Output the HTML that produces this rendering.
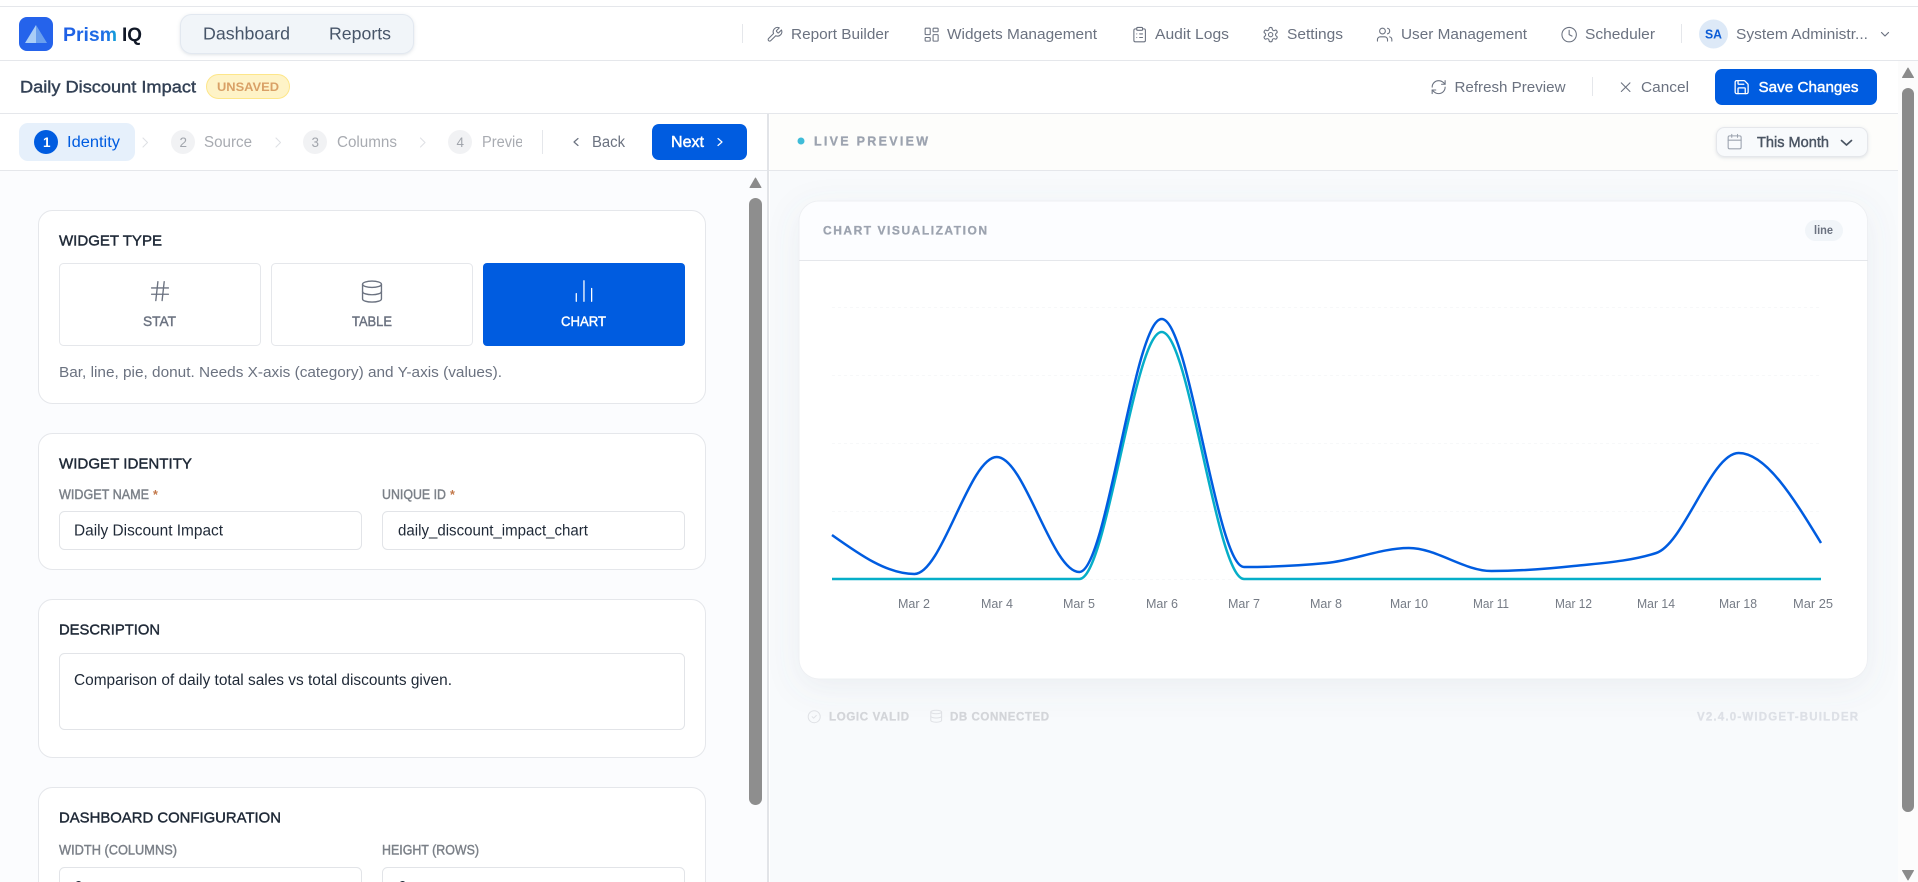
<!DOCTYPE html>
<html lang="en">
<head>
<meta charset="utf-8">
<title>Daily Discount Impact - Prism IQ</title>
<style>
html,body{margin:0;padding:0;background:#fff;width:1918px;height:882px;overflow:hidden}
svg{display:block}
text{font-family:"Liberation Sans",Arial,sans-serif;white-space:pre}
.b{font-weight:700}
.s{fill:currentColor;stroke:currentColor;stroke-width:.42px}
.x{font-weight:700;fill:currentColor;stroke:currentColor;stroke-width:.3px}
.ic{fill:none;stroke-linecap:round;stroke-linejoin:round}
</style>
</head>
<body>
<svg xmlns="http://www.w3.org/2000/svg" width="1918" height="882" viewBox="0 0 1918 882">
<defs>
<linearGradient id="pg" x1="0" x2="1" y1="0" y2="0"><stop offset="0" stop-color="#1f5fe6"/><stop offset=".8" stop-color="#1f6fe6"/><stop offset="1" stop-color="#12a5d8"/></linearGradient>
<filter id="cs" x="-10%" y="-15%" width="120%" height="130%"><feDropShadow dx="0" dy="8" stdDeviation="16" flood-color="#64748b" flood-opacity=".09"/></filter>
<filter id="ss" x="-10%" y="-20%" width="120%" height="150%"><feDropShadow dx="0" dy="1" stdDeviation="1.5" flood-color="#64748b" flood-opacity=".2"/></filter>
<clipPath id="pv"><rect x="480" y="125" width="42" height="34"/></clipPath>
<clipPath id="chead"><rect x="799" y="201" width="1069" height="59"/></clipPath>
</defs>

<!-- page backgrounds -->
<rect width="1918" height="882" fill="#fff"/>
<rect x="0" y="171" width="768" height="711" fill="#fbfcfe"/>
<rect x="770" y="114" width="1128" height="56" fill="#fdfdfb"/>
<rect x="770" y="171" width="1128" height="711" fill="#f8fafc"/>
<rect x="1898" y="61" width="20" height="821" fill="#fcfcfc"/>
<rect x="0" y="6" width="1918" height="1" fill="#e5e7eb"/>
<rect x="0" y="60" width="1918" height="1" fill="#e5e7eb"/>
<rect x="0" y="113" width="1898" height="1" fill="#e5e7eb"/>
<rect x="0" y="170" width="1898" height="1" fill="#e5e7eb"/>
<rect x="767" y="114" width="2" height="768" fill="#e2e4e8"/>

<!-- top nav: logo -->
<rect x="19" y="17" width="34" height="34" rx="8" fill="#2563eb"/>
<path d="M36 25L25 43H36Z" fill="#a9cdf6"/>
<path d="M36 25L47 43H36Z" fill="#6a9fee"/>
<text x="63" y="41" font-size="19.500" class="b" fill="url(#pg)" textLength="54" lengthAdjust="spacingAndGlyphs">Prism</text>
<text x="122" y="41" font-size="19.500" class="b" fill="#111827" textLength="20" lengthAdjust="spacingAndGlyphs">IQ</text>

<rect x="180.500" y="14.500" width="233" height="39" rx="11" fill="#f1f5f9" stroke="#e2e8f0" filter="url(#ss)"/>
<text x="203" y="39.500" font-size="17.500" fill="#475569" textLength="87" lengthAdjust="spacingAndGlyphs">Dashboard</text>
<text x="329" y="39.500" font-size="17.500" fill="#475569" textLength="62" lengthAdjust="spacingAndGlyphs">Reports</text>

<rect x="742" y="24" width="1" height="19" fill="#e5e7eb"/>

<!-- top nav: links -->
<g class="ic" stroke="#6b7280" stroke-width="1.500">
<g transform="translate(766,26) scale(.72)"><path d="M14.7 6.3a1 1 0 0 0 0 1.4l1.6 1.6a1 1 0 0 0 1.4 0l3.77-3.77a6 6 0 0 1-7.94 7.94l-6.91 6.91a2.12 2.12 0 0 1-3-3l6.91-6.91a6 6 0 0 1 7.94-7.94l-3.76 3.76z"/></g>
<g transform="translate(923,26) scale(.72)"><rect x="3" y="3" width="7" height="9" rx="1"/><rect x="14" y="3" width="7" height="5" rx="1"/><rect x="14" y="12" width="7" height="9" rx="1"/><rect x="3" y="16" width="7" height="5" rx="1"/></g>
<g transform="translate(1131,26) scale(.72)"><rect x="8" y="2" width="8" height="4" rx="1"/><path d="M16 4h2a2 2 0 0 1 2 2v14a2 2 0 0 1-2 2H6a2 2 0 0 1-2-2V6a2 2 0 0 1 2-2h2"/><path d="M12 11h4M12 16h4M8 11h.01M8 16h.01"/></g>
<g transform="translate(1262,26) scale(.72)"><path d="M12.22 2h-.44a2 2 0 0 0-2 2v.18a2 2 0 0 1-1 1.730l-.43.25a2 2 0 0 1-2 0l-.15-.08a2 2 0 0 0-2.730.73l-.22.38a2 2 0 0 0 .73 2.730l.15.1a2 2 0 0 1 1 1.720v.51a2 2 0 0 1-1 1.740l-.15.09a2 2 0 0 0-.73 2.730l.22.38a2 2 0 0 0 2.730.73l.15-.08a2 2 0 0 1 2 0l.43.25a2 2 0 0 1 1 1.730V20a2 2 0 0 0 2 2h.44a2 2 0 0 0 2-2v-.18a2 2 0 0 1 1-1.730l.43-.25a2 2 0 0 1 2 0l.15.08a2 2 0 0 0 2.730-.73l.22-.39a2 2 0 0 0-.73-2.730l-.15-.08a2 2 0 0 1-1-1.740v-.5a2 2 0 0 1 1-1.740l.15-.09a2 2 0 0 0 .73-2.730l-.22-.38a2 2 0 0 0-2.730-.73l-.15.08a2 2 0 0 1-2 0l-.43-.25a2 2 0 0 1-1-1.730V4a2 2 0 0 0-2-2z"/><circle cx="12" cy="12" r="3"/></g>
<g transform="translate(1376,26) scale(.72)"><path d="M16 21v-2a4 4 0 0 0-4-4H6a4 4 0 0 0-4 4v2"/><circle cx="9" cy="7" r="4"/><path d="M22 21v-2a4 4 0 0 0-3-3.870"/><path d="M16 3.130a4 4 0 0 1 0 7.750"/></g>
<g transform="translate(1560.500,26) scale(.72)"><circle cx="12" cy="12" r="10"/><path d="M12 6v6l4 2"/></g>
</g>
<g font-size="15" fill="#6b7280">
<text x="791" y="39" textLength="98" lengthAdjust="spacingAndGlyphs">Report Builder</text>
<text x="947" y="39" textLength="150" lengthAdjust="spacingAndGlyphs">Widgets Management</text>
<text x="1155" y="39" textLength="74" lengthAdjust="spacingAndGlyphs">Audit Logs</text>
<text x="1287" y="39" textLength="56" lengthAdjust="spacingAndGlyphs">Settings</text>
<text x="1401" y="39" textLength="126" lengthAdjust="spacingAndGlyphs">User Management</text>
<text x="1585" y="39" textLength="70" lengthAdjust="spacingAndGlyphs">Scheduler</text>
<text x="1736" y="39" textLength="132" lengthAdjust="spacingAndGlyphs">System Administr...</text>
</g>
<rect x="1681" y="24" width="1" height="19" fill="#e5e7eb"/>
<circle cx="1713.500" cy="34" r="14.500" fill="#dde9f7"/>
<text x="1705" y="38.500" font-size="12.500" class="b" fill="#0b5cd6" textLength="17" lengthAdjust="spacingAndGlyphs">SA</text>
<path class="ic" d="M1881.500 32.500l3.500 3.500 3.500-3.500" stroke="#6b7280" stroke-width="1.200"/>

<!-- sub header -->
<text x="20" y="92.500" font-size="17" class="s" color="#334155" textLength="176" lengthAdjust="spacingAndGlyphs">Daily Discount Impact</text>
<rect x="206.500" y="74.500" width="83" height="24" rx="12" fill="#fef3c7" stroke="#fde68a"/>
<text x="217" y="91" font-size="12" class="b" fill="#d9a066" textLength="62" lengthAdjust="spacingAndGlyphs">UNSAVED</text>
<g class="ic" stroke="#6b7280" stroke-width="1.500">
<g transform="translate(1430,78.500) scale(.72)"><path d="M3 12a9 9 0 0 1 9-9 9.750 9.750 0 0 1 6.740 2.740L21 8"/><path d="M21 3v5h-5"/><path d="M21 12a9 9 0 0 1-9 9 9.750 9.750 0 0 1-6.740-2.740L3 16"/><path d="M8 16H3v5"/></g>
<g transform="translate(1617,78.500) scale(.72)"><path d="M18 6 6 18M6 6l12 12"/></g>
</g>
<text x="1454.500" y="92" font-size="15" fill="#6b7280" textLength="111" lengthAdjust="spacingAndGlyphs">Refresh Preview</text>
<rect x="1592" y="77" width="1" height="19" fill="#e5e7eb"/>
<text x="1641" y="92" font-size="15" fill="#6b7280" textLength="48" lengthAdjust="spacingAndGlyphs">Cancel</text>
<rect x="1715" y="69" width="162" height="36" rx="7" fill="#005ce0"/>
<g class="ic" stroke="#fff" stroke-width="1.800" transform="translate(1733,78.500) scale(.72)"><path d="M15.200 3a2 2 0 0 1 1.400.6l3.800 3.800a2 2 0 0 1 .6 1.400V19a2 2 0 0 1-2 2H5a2 2 0 0 1-2-2V5a2 2 0 0 1 2-2z"/><path d="M17 21v-7a1 1 0 0 0-1-1H8a1 1 0 0 0-1 1v7"/><path d="M7 3v4a1 1 0 0 0 1 1h7"/></g>
<text x="1758.500" y="92" font-size="15" class="s" color="#fff" textLength="100" lengthAdjust="spacingAndGlyphs">Save Changes</text>

<!-- stepper -->
<rect x="19" y="123" width="116" height="38" rx="9" fill="#e6f0fb"/>
<circle cx="46" cy="142" r="12" fill="#005ce0"/>
<text x="43" y="147" font-size="13.500" class="b" fill="#fff">1</text>
<text x="67" y="147" font-size="15.500" fill="#005ce0" textLength="53" lengthAdjust="spacingAndGlyphs">Identity</text>
<g class="ic" stroke="#dfe1e5" stroke-width="1.100">
<path d="M143 138l4.500 4.500-4.500 4.500M276 138l4.500 4.500-4.500 4.500M420.500 138l4.500 4.500-4.500 4.500"/>
</g>
<g fill="#f1f2f4"><circle cx="183" cy="142" r="12"/><circle cx="315" cy="142" r="12"/><circle cx="460" cy="142" r="12"/></g>
<g font-size="13.500" fill="#a1a5ac"><text x="179.500" y="147">2</text><text x="311.500" y="147">3</text><text x="456.500" y="147">4</text></g>
<g font-size="15.500" fill="#a8abb1">
<text x="204" y="147" textLength="48" lengthAdjust="spacingAndGlyphs">Source</text>
<text x="337" y="147" textLength="60" lengthAdjust="spacingAndGlyphs">Columns</text>
<text x="482" y="147" textLength="52" lengthAdjust="spacingAndGlyphs" clip-path="url(#pv)">Preview</text>
</g>
<rect x="542" y="130" width="1" height="24" fill="#e5e7eb"/>
<path class="ic" d="M578 138.500l-4 3.500 4 3.500" stroke="#6b7280" stroke-width="1.200"/>
<text x="592" y="147" font-size="15.500" fill="#6b7280" textLength="33" lengthAdjust="spacingAndGlyphs">Back</text>
<rect x="652" y="124" width="95" height="36" rx="7" fill="#005ce0"/>
<text x="671" y="147" font-size="15.500" class="s" color="#fff" textLength="33" lengthAdjust="spacingAndGlyphs">Next</text>
<path class="ic" d="M718 138.500l4 3.500-4 3.500" stroke="#fff" stroke-width="1.200"/>

<!-- left: widget type card -->
<rect x="38.500" y="210.500" width="667" height="193" rx="14" fill="#fff" stroke="#e5e7eb"/>
<text x="59" y="245.500" font-size="15" class="s" color="#1f2937" textLength="103" lengthAdjust="spacingAndGlyphs">WIDGET TYPE</text>
<rect x="59.500" y="263.500" width="201" height="82" rx="4" fill="#fff" stroke="#e5e7eb"/>
<rect x="271.500" y="263.500" width="201" height="82" rx="4" fill="#fff" stroke="#e5e7eb"/>
<rect x="483" y="263" width="202" height="83" rx="4" fill="#005ce0"/>
<g class="ic" stroke="#6b7280" stroke-width="1.300">
<g transform="translate(147.400,278.500) scale(1.050)"><path d="M4 9h16M4 15h16M10 3 8 21M16 3l-2 18"/></g>
<g transform="translate(359.400,279) scale(1.050)"><ellipse cx="12" cy="5" rx="9" ry="3"/><path d="M3 5V19A9 3 0 0 0 21 19V5"/><path d="M3 12A9 3 0 0 0 21 12"/></g>
</g>
<g class="ic" stroke="#fff" stroke-width="1" transform="translate(568.600,275.700) scale(1.280)"><path d="M18 20V10M12 20V4M6 20v-6"/></g>
<text x="143" y="326" font-size="13.500" class="s" color="#6b7280" textLength="33" lengthAdjust="spacingAndGlyphs">STAT</text>
<text x="352" y="326" font-size="13.500" class="s" color="#6b7280" textLength="40" lengthAdjust="spacingAndGlyphs">TABLE</text>
<text x="561" y="326" font-size="13.500" class="s" color="#fff" textLength="45" lengthAdjust="spacingAndGlyphs">CHART</text>
<text x="59" y="377" font-size="15" fill="#6b7280" textLength="443" lengthAdjust="spacingAndGlyphs">Bar, line, pie, donut. Needs X-axis (category) and Y-axis (values).</text>

<!-- left: widget identity card -->
<rect x="38.500" y="433.500" width="667" height="136" rx="14" fill="#fff" stroke="#e5e7eb"/>
<text x="59" y="468.500" font-size="15" class="s" color="#1f2937" textLength="133" lengthAdjust="spacingAndGlyphs">WIDGET IDENTITY</text>
<text x="59" y="499" font-size="13.500" class="s" color="#7b8088" textLength="90" lengthAdjust="spacingAndGlyphs">WIDGET NAME</text>
<text x="153" y="499" font-size="12.500" class="b" fill="#c2784a">*</text>
<text x="382" y="499" font-size="13.500" class="s" color="#7b8088" textLength="64" lengthAdjust="spacingAndGlyphs">UNIQUE ID</text>
<text x="450" y="499" font-size="12.500" class="b" fill="#c2784a">*</text>
<rect x="59.500" y="511.500" width="302" height="38" rx="5" fill="#fff" stroke="#e2e4e8"/>
<rect x="382.500" y="511.500" width="302" height="38" rx="5" fill="#fff" stroke="#e2e4e8"/>
<text x="74" y="535.500" font-size="15.500" fill="#1f2937" textLength="149" lengthAdjust="spacingAndGlyphs">Daily Discount Impact</text>
<text x="398" y="535.500" font-size="15.500" fill="#1f2937" textLength="190" lengthAdjust="spacingAndGlyphs">daily_discount_impact_chart</text>

<!-- left: description card -->
<rect x="38.500" y="599.500" width="667" height="158" rx="14" fill="#fff" stroke="#e5e7eb"/>
<text x="59" y="634.500" font-size="15" class="s" color="#1f2937" textLength="101" lengthAdjust="spacingAndGlyphs">DESCRIPTION</text>
<rect x="59.500" y="653.500" width="625" height="76" rx="5" fill="#fff" stroke="#e2e4e8"/>
<text x="74" y="685" font-size="15.500" fill="#1f2937" textLength="378" lengthAdjust="spacingAndGlyphs">Comparison of daily total sales vs total discounts given.</text>

<!-- left: dashboard configuration card -->
<rect x="38.500" y="787.500" width="667" height="120" rx="14" fill="#fff" stroke="#e5e7eb"/>
<text x="59" y="822.500" font-size="15" class="s" color="#1f2937" textLength="222" lengthAdjust="spacingAndGlyphs">DASHBOARD CONFIGURATION</text>
<text x="59" y="854.500" font-size="13.500" class="s" color="#7b8088" textLength="118" lengthAdjust="spacingAndGlyphs">WIDTH (COLUMNS)</text>
<text x="382" y="854.500" font-size="13.500" class="s" color="#7b8088" textLength="97" lengthAdjust="spacingAndGlyphs">HEIGHT (ROWS)</text>
<rect x="59.500" y="867.500" width="302" height="38" rx="5" fill="#fff" stroke="#e2e4e8"/>
<rect x="382.500" y="867.500" width="302" height="38" rx="5" fill="#fff" stroke="#e2e4e8"/>
<text x="74" y="891" font-size="15" fill="#1f2937">6</text>
<text x="398" y="891" font-size="15" fill="#1f2937">6</text>

<!-- left scrollbar -->
<path d="M755.500 178l5.500 9.500h-11z" fill="#8b8b8b" stroke="#8b8b8b" stroke-linejoin="round"/>
<rect x="749" y="198" width="13" height="607" rx="6.500" fill="#8e8e8e"/>

<!-- preview header -->
<circle cx="801" cy="141" r="3.500" fill="#3fbcd8"/>
<text x="814" y="145.500" font-size="12.500" class="x" color="#9ca3af" textLength="114" lengthAdjust="spacing">LIVE PREVIEW</text>
<rect x="1716.500" y="127.500" width="151" height="29" rx="8" fill="#f8fafc" stroke="#e5e7eb" filter="url(#ss)"/>
<g class="ic" stroke="#9ca3af" stroke-width="1.500" transform="translate(1726,133) scale(.72)"><path d="M8 2v4M16 2v4"/><rect x="3" y="4" width="18" height="18" rx="2"/><path d="M3 10h18"/></g>
<text x="1757" y="147" font-size="14.500" class="s" color="#4b5563" textLength="72" lengthAdjust="spacingAndGlyphs">This Month</text>
<path class="ic" d="M1841.500 140.500l5 4.500 5-4.500" stroke="#4b5563" stroke-width="1.700"/>

<!-- chart card -->
<rect x="799" y="201" width="1068.500" height="478" rx="20" fill="#fff" stroke="#eef0f3" filter="url(#cs)"/>
<rect x="799.500" y="201.500" width="1067.500" height="80" rx="20" fill="#fcfdff" clip-path="url(#chead)"/>
<rect x="799" y="260" width="1069" height="1" fill="#e5e7eb"/>
<text x="823" y="234.500" font-size="12" class="x" color="#9ca3af" textLength="164" lengthAdjust="spacing">CHART VISUALIZATION</text>
<rect x="1805" y="220" width="38" height="21" rx="10.500" fill="#f1f5f9"/>
<text x="1814" y="234" font-size="11.500" class="b" fill="#6b7280" textLength="19" lengthAdjust="spacingAndGlyphs">line</text>

<g stroke="#f7f8f9" stroke-dasharray="3 3" stroke-width="1">
<path d="M832 307.500H1821M832 375.500H1821M832 443.500H1821M832 511.500H1821M832 579.500H1821"/>
</g>
<path fill="none" stroke="#06aec8" stroke-width="2.500" d="M832 579H1079.300C1106.800 579 1134.200 332 1161.700 332C1189.200 332 1216.600 579 1244.100 579H1821"/>
<path fill="none" stroke="#005ce0" stroke-width="2.500" d="M832 535C859.500 554.500 886.900 574 914.400 574C941.900 574 969.300 457 996.800 457C1024.300 457 1051.800 572 1079.300 572C1106.800 572 1134.200 319 1161.700 319C1189.200 319 1216.600 567 1244.100 567C1271.600 567 1299 565.670 1326.500 563C1354 560.330 1381.400 548 1408.900 548C1436.400 548 1463.900 571 1491.400 571C1518.900 571 1546.300 569 1573.800 566C1601.300 563 1628.700 561.670 1656.200 553C1683.700 544.330 1711.100 453 1738.600 453C1766.100 453 1793.500 498 1821 543"/>

<g font-size="13" fill="#757b85">
<text x="898" y="608" textLength="32" lengthAdjust="spacingAndGlyphs">Mar 2</text>
<text x="981" y="608" textLength="32" lengthAdjust="spacingAndGlyphs">Mar 4</text>
<text x="1063" y="608" textLength="32" lengthAdjust="spacingAndGlyphs">Mar 5</text>
<text x="1146" y="608" textLength="32" lengthAdjust="spacingAndGlyphs">Mar 6</text>
<text x="1228" y="608" textLength="32" lengthAdjust="spacingAndGlyphs">Mar 7</text>
<text x="1310" y="608" textLength="32" lengthAdjust="spacingAndGlyphs">Mar 8</text>
<text x="1390" y="608" textLength="38" lengthAdjust="spacingAndGlyphs">Mar 10</text>
<text x="1473" y="608" textLength="36" lengthAdjust="spacingAndGlyphs">Mar 11</text>
<text x="1555" y="608" textLength="37" lengthAdjust="spacingAndGlyphs">Mar 12</text>
<text x="1637" y="608" textLength="38" lengthAdjust="spacingAndGlyphs">Mar 14</text>
<text x="1719" y="608" textLength="38" lengthAdjust="spacingAndGlyphs">Mar 18</text>
<text x="1793" y="608" textLength="40" lengthAdjust="spacingAndGlyphs">Mar 25</text>
</g>

<!-- preview footer -->
<g class="ic" stroke="#dfe1e5" stroke-width="1.700">
<g transform="translate(807,709.500) scale(.6)"><circle cx="12" cy="12" r="10"/><path d="M8.500 12l2.500 2.500 4.500-4.500"/></g>
<g transform="translate(929,709) scale(.6)"><ellipse cx="12" cy="5" rx="9" ry="3"/><path d="M3 5V19A9 3 0 0 0 21 19V5"/><path d="M3 12A9 3 0 0 0 21 12"/></g>
</g>
<text x="829" y="720.500" font-size="11.500" class="x" color="#d3d5d9" textLength="80" lengthAdjust="spacing">LOGIC VALID</text>
<text x="950" y="720.500" font-size="11.500" class="x" color="#d3d5d9" textLength="99" lengthAdjust="spacing">DB CONNECTED</text>
<text x="1697" y="720.500" font-size="11.500" class="x" color="#dde0e6" textLength="161" lengthAdjust="spacing">V2.4.0-WIDGET-BUILDER</text>

<!-- page scrollbar -->
<path d="M1908 68l5.500 9.500h-11z" fill="#8b8b8b" stroke="#8b8b8b" stroke-linejoin="round"/>
<rect x="1902" y="88" width="12" height="724" rx="6" fill="#8b8b8b"/>
<path d="M1902.500 870.500h11l-5.500 9.500z" fill="#8b8b8b" stroke="#8b8b8b" stroke-linejoin="round"/>
</svg>
</body>
</html>
